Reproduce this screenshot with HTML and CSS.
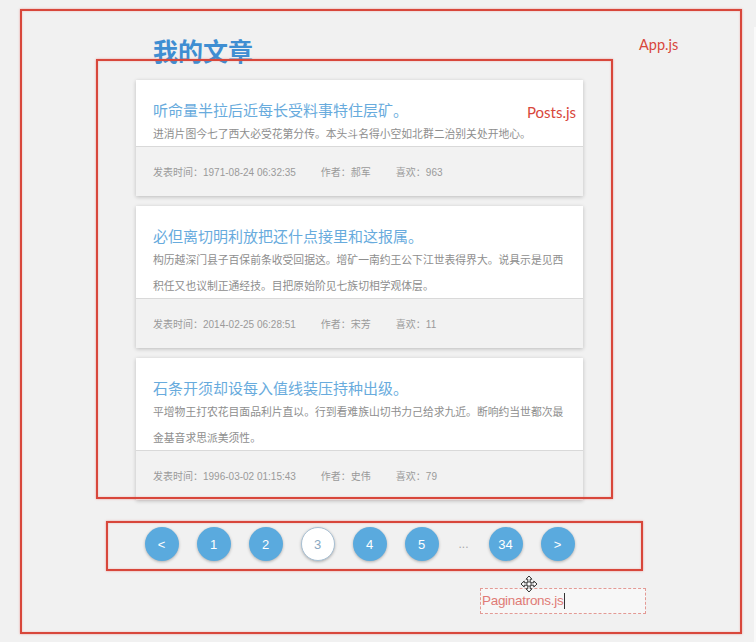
FILE: index.html
```html
<!DOCTYPE html>
<html lang="zh">
<head>
<meta charset="utf-8">
<title>我的文章</title>
<link rel="stylesheet" href="styles.css">
</head>
<body>
<div class="app">
  <h1 class="page-title">我的文章</h1>
  <div class="posts">
    <article class="post">
      <div class="post-main">
        <h2 class="post-title">听命量半拉后近每长受料事特住层矿。</h2>
        <p class="post-body">进消片图今七了西大必受花第分传。本头斗名得小空如北群二治别关处开地心。</p>
      </div>
      <div class="post-meta">
        <span class="meta-item">发表时间：<span class="num">1971-08-24 06:32:35</span></span>
        <span class="meta-item">作者：郝军</span>
        <span class="meta-item">喜欢：963</span>
      </div>
    </article>
    <article class="post">
      <div class="post-main">
        <h2 class="post-title">必但离切明利放把还什点接里和这报属。</h2>
        <p class="post-body">构历越深门县子百保前条收受回据这。增矿一南约王公下江世表得界大。说具示是见西积任又也议制正通经技。目把原始阶见七族切相学观体层。</p>
      </div>
      <div class="post-meta">
        <span class="meta-item">发表时间：<span class="num">2014-02-25 06:28:51</span></span>
        <span class="meta-item">作者：宋芳</span>
        <span class="meta-item">喜欢：11</span>
      </div>
    </article>
    <article class="post">
      <div class="post-main">
        <h2 class="post-title">石条开须却设每入值线装压持种出级。</h2>
        <p class="post-body">平增物王打农花目面品利片直以。行到看难族山切书力己给求九近。断响约当世都次最金基音求思派美须性。</p>
      </div>
      <div class="post-meta">
        <span class="meta-item">发表时间：<span class="num">1996-03-02 01:15:43</span></span>
        <span class="meta-item">作者：史伟</span>
        <span class="meta-item">喜欢：79</span>
      </div>
    </article>
  </div>
  <nav class="pagination">
    <a class="page">&lt;</a>
    <a class="page">1</a>
    <a class="page">2</a>
    <a class="page active">3</a>
    <a class="page">4</a>
    <a class="page">5</a>
    <span class="dots">...</span>
    <a class="page">34</a>
    <a class="page">&gt;</a>
  </nav>
</div>

<div class="anno anno-app"></div>
<div class="anno-label label-app">App.js</div>
<div class="anno anno-posts"></div>
<div class="anno-label label-posts">Posts.js</div>
<div class="anno anno-pag"></div>
<div class="edit-box"><span class="edit-text">Paginatrons.js</span><span class="caret"></span></div>
<svg class="move-cursor" width="18" height="18" viewBox="0 0 18 18">
  <path d="M9 1 L12 4.2 L10.2 4.2 L10.2 7.8 L13.8 7.8 L13.8 6 L17 9 L13.8 12 L13.8 10.2 L10.2 10.2 L10.2 13.8 L12 13.8 L9 17 L6 13.8 L7.8 13.8 L7.8 10.2 L4.2 10.2 L4.2 12 L1 9 L4.2 6 L4.2 7.8 L7.8 7.8 L7.8 4.2 L6 4.2 Z" fill="#fff" stroke="#333" stroke-width="1" stroke-linejoin="round"/>
  <circle cx="9" cy="9" r="2.2" fill="#fff" stroke="#333" stroke-width="0.9"/>
</svg>
<div class="edge-strip"></div>
</body>
</html>
```

FILE: styles.css
```css
html, body {
  margin: 0;
  padding: 0;
}
body {
  background: #f1f1f1;
  font-family: "Liberation Sans", "Noto Sans CJK SC", sans-serif;
  width: 756px;
  height: 642px;
  overflow: hidden;
  position: relative;
}
.app {
  margin-left: 136px;
  width: 447px;
  padding-top: 35px;
}
.page-title {
  margin: 0 0 15px 17px;
  font-size: 25px;
  line-height: 30px;
  font-weight: 700;
  color: #3f8ed2;
  font-family: "Noto Sans CJK SC", sans-serif;
}
.posts {
  display: flex;
  flex-direction: column;
  gap: 10px;
}
.post {
  background: #fff;
  box-shadow: 0 1px 4px rgba(0, 0, 0, 0.22);
}
.post-main {
  padding: 20px 17px 0 17px;
}
.post-title {
  margin: 0;
  font-size: 15px;
  line-height: 20px;
  font-weight: 400;
  color: #68abdd;
  font-family: "Noto Sans CJK SC", sans-serif;
}
.post-body {
  margin: 0;
  font-size: 10.8px;
  line-height: 26px;
  color: #8e8e8e;
  font-family: "Noto Sans CJK SC", sans-serif;
}
.post-meta {
  height: 49px;
  border-top: 1px solid #d9d9d9;
  background: #f2f2f2;
  display: flex;
  align-items: center;
  padding: 0 17px;
  gap: 25px;
  font-size: 10px;
  color: #9a9a9a;
}
.pagination {
  margin-top: 27px;
  display: flex;
  justify-content: center;
  align-items: center;
  gap: 18px;
  height: 34px;
}
.page {
  width: 34px;
  height: 34px;
  border-radius: 50%;
  background: #5aaade;
  color: #fff;
  font-size: 13px;
  display: flex;
  align-items: center;
  justify-content: center;
  box-shadow: 0 1px 3px rgba(0, 0, 0, 0.28);
  box-sizing: border-box;
}
.page.active {
  background: #fff;
  color: #8aa8c2;
  border: 1px solid #a8c0d4;
}
.dots {
  width: 14px;
  text-align: center;
  color: #aaa;
  font-size: 12px;
}

/* annotation overlays */
.anno {
  position: absolute;
  border: 2px solid #d8473b;
  box-shadow: 0 0 2px rgba(230, 90, 80, 0.55), inset 0 0 2px rgba(230, 90, 80, 0.4);
  box-sizing: border-box;
  pointer-events: none;
}
.anno-app {
  left: 20px;
  top: 9px;
  width: 722px;
  height: 625px;
}
.anno-posts {
  left: 96px;
  top: 59px;
  width: 517px;
  height: 440px;
}
.anno-pag {
  left: 106px;
  top: 521px;
  width: 537px;
  height: 50px;
}
.anno-label {
  position: absolute;
  color: #d8473b;
  font-family: "Lato", "Open Sans", sans-serif;
}
.label-app {
  left: 639px;
  top: 36px;
  font-size: 14.5px;
}
.label-posts {
  left: 527px;
  top: 103px;
  font-size: 15px;
}
.edit-box {
  position: absolute;
  left: 480px;
  top: 588px;
  width: 166px;
  height: 26px;
  border: 1px dashed #e39a95;
  background: #f7f7f7;
  box-sizing: border-box;
  display: flex;
  align-items: center;
  padding-left: 1px;
}
.edit-text {
  color: #e07b76;
  font-size: 13.5px;
  letter-spacing: -0.3px;
  line-height: 16px;
}
.caret {
  width: 1px;
  height: 16px;
  background: #333;
  margin-left: 1px;
}
.move-cursor {
  position: absolute;
  left: 520px;
  top: 575px;
}
.edge-strip {
  position: absolute;
  left: 754px;
  top: 27px;
  width: 2px;
  height: 615px;
  background: #fafafa;
}
```
